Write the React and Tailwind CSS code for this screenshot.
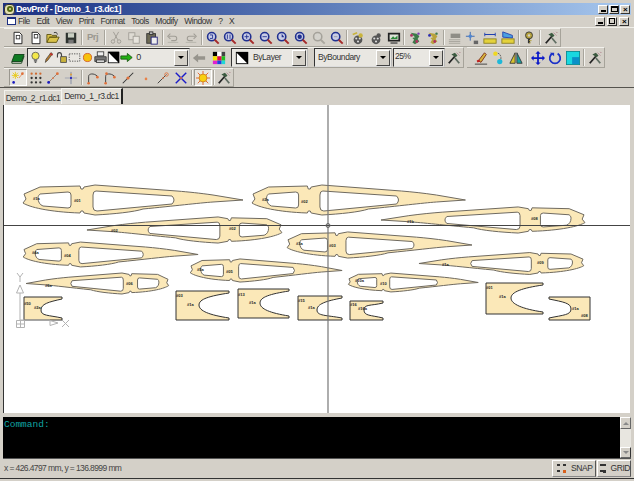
import React from 'react'

const I = ({ children }) => (
    <svg width="14" height="14" viewBox="0 0 16 16" fill="none">{children}</svg>
)

const B = ({ children, active }) => (
    <div className={`w-[17.7px] h-full shrink-0 flex items-center justify-center ${active ? 'bg-[#e8e6e0] border border-t-[#9a978f] border-l-[#9a978f] border-r-white border-b-white' : ''}`}>
        {children}
    </div>
)

const Sep = () => (
    <div className="w-[4px] shrink-0 h-full flex justify-center py-[1px]">
        <div className="w-[1px] h-full bg-[#a8a59c] border-r border-[#f4f3ef] box-content"></div>
    </div>
)

const Toolbar = ({ children }) => (
    <div className="flex h-full items-stretch pl-[5px] border-t border-[#f2f1ec] border-b border-b-[#a6a39a] border-r border-r-[#a6a39a]">
        {children}
    </div>
)

const Combo = ({ className, children }) => (
    <div className={`h-[19px] self-center shrink-0 flex items-center bg-[#e9e7e2] border border-t-[#333] border-l-[#333] border-r-[#bbb] border-b-[#ddd] ${className}`}>
        <div className="flex-1 flex items-center min-w-0 overflow-hidden h-full">{children}</div>
        <div className="w-[14px] h-[16px] mr-[1px] bg-[#d4d0c8] border border-t-white border-l-white border-r-[#444] border-b-[#444] flex items-center justify-center">
            <div className="w-0 h-0 border-x-[3px] border-x-transparent border-t-[3px] border-t-black"></div>
        </div>
    </div>
)

const Doc = ({ mark }) => (
    <I>
        <path d="M3.5 1.5h6l3 3v10h-9z" fill="#fff" stroke="#111" />
        <rect x="6" y={mark} width="4" height="4" fill="none" stroke="#333" />
    </I>
)
const Folder = () => (
    <I>
        <path d="M1 13V4h5l1 1h5v2H4l-3 6h11l3-6H4" fill="#d9c24a" stroke="#5a5010" />
        <path d="M9 2c2-1 4 0 4 2" stroke="#222" />
    </I>
)
const Save = () => (
    <I>
        <rect x="2" y="2" width="12" height="12" fill="#2f3430" />
        <rect x="4.5" y="2.5" width="7" height="5" fill="#c9cfc2" />
        <rect x="5" y="10" width="6" height="4" fill="#777" />
    </I>
)
const Scissors = () => (
    <I>
        <path d="M5 1l5 9M11 1L6 10" stroke="#9b9890" />
        <circle cx="4.5" cy="12" r="2" stroke="#9b9890" />
        <circle cx="11.5" cy="12" r="2" stroke="#9b9890" />
    </I>
)
const Copy = () => (
    <I>
        <rect x="2" y="2" width="7" height="8" fill="#dedbd3" stroke="#a09d95" />
        <rect x="7" y="6" width="7" height="8" fill="#e6e3dc" stroke="#a09d95" />
    </I>
)
const Paste = () => (
    <I>
        <rect x="2" y="3" width="10" height="11" fill="#6d6a55" stroke="#333" />
        <rect x="5" y="1" width="4" height="3" fill="#bbb" stroke="#333" />
        <rect x="7" y="7" width="7" height="8" fill="#eee" stroke="#23237a" />
    </I>
)
const Undo = ({ flip }) => (
    <I>
        <g transform={flip ? 'matrix(-1 0 0 1 16 0)' : undefined}>
            <path d="M3 6h7c3 0 3 5 0 5H6" stroke="#a09d95" strokeWidth="1.2" />
            <path d="M5 3L2 6l3 3" stroke="#a09d95" strokeWidth="1.2" />
            <path d="M2 13h12" stroke="#b5b2aa" />
        </g>
    </I>
)
const Zoom = ({ gray, children }) => (
    <I>
        <circle cx="6.5" cy="6.5" r="4.7" fill={gray ? '#d4d2cc' : '#c8cce6'} stroke={gray ? '#a5a29a' : '#20308f'} strokeWidth="1.8" />
        {children}
        <path d="M10 10l4.5 4.5" stroke={gray ? '#aaa79f' : '#a52a2a'} strokeWidth="2.2" />
    </I>
)
const Reel = ({ mark }) => (
    <I>
        <circle cx="8" cy="10" r="5" fill="#555" />
        <circle cx="6" cy="8.5" r="1.2" fill="#ddd" />
        <circle cx="10" cy="8.5" r="1.2" fill="#ddd" />
        <circle cx="8" cy="12" r="1.2" fill="#ddd" />
        <circle cx="11" cy="5" r="2.5" fill={mark ? '#c9b43c' : '#555'} />
        {mark && <path d="M2 4l5-2" stroke="#c9b43c" strokeWidth="2" />}
    </I>
)
const Monitor = () => (
    <I>
        <rect x="1" y="2" width="14" height="10" fill="#222" />
        <rect x="3" y="4" width="10" height="6" fill="#dfe3d8" />
        <path d="M4 9l3-3 2 2 3-3v4H4z" fill="#2d8a3a" />
        <rect x="4" y="13" width="8" height="1.5" fill="#444" />
    </I>
)
const Blob = ({ alt }) => (
    <I>
        <path d="M3 2l7 1 3 3-2 3 2 3-5 3-3-2 2-3-2-2 3-1-2-2z" fill={alt ? '#b8a23c' : '#3d7a4a'} />
        <circle cx="4" cy="5" r="1.6" fill={alt ? '#2f2fb0' : '#b03060'} />
        <circle cx="10" cy="12" r="1.6" fill="#b03060" />
        <circle cx="12" cy="3" r="1.4" fill={alt ? '#3d7a4a' : '#7a3db0'} />
    </I>
)
const GrayLayers = () => (
    <I>
        <rect x="3" y="3" width="11" height="5" fill="#8f8d86" />
        <path d="M1 10h13M1 12h13M1 14h13" stroke="#a5a29a" />
    </I>
)
const Coord = () => (
    <I>
        <path d="M6 1v10M1 6h10" stroke="#2f5fb0" />
        <circle cx="6" cy="6" r="2" fill="#4f86d0" />
        <rect x="10" y="11" width="5" height="4" fill="#666" />
    </I>
)
const DimA = () => (
    <I>
        <path d="M2 4h12" stroke="#1f3fb0" strokeWidth="1.2" />
        <path d="M2 2v4M14 2v4" stroke="#1f3fb0" />
        <rect x="1" y="9" width="14" height="5" fill="#e4d23c" stroke="#8a7f20" />
    </I>
)
const DimB = () => (
    <I>
        <path d="M2 7V1l11 4v3z" fill="#4aa0e0" stroke="#1f3fb0" />
        <rect x="1" y="9" width="14" height="5" fill="#e4d23c" stroke="#8a7f20" />
    </I>
)
const Help = () => (
    <I>
        <circle cx="8" cy="5" r="4" fill="#b5a23c" stroke="#333" />
        <circle cx="8" cy="5" r="1.4" fill="#d4d0c8" />
        <path d="M8 9v5" stroke="#333" strokeWidth="2.5" />
        <path d="M8 11h3M8 13.500h2" stroke="#b5a23c" />
    </I>
)
const Tool = () => (
    <I>
        <path d="M2 14l7-8" stroke="#222" strokeWidth="2" />
        <path d="M5 4l4-2 3 3-2 2z" fill="#3b5a40" />
        <path d="M9 8l5 6" stroke="#5f6d62" strokeWidth="2" />
        <path d="M11 2l1 1M13 4l1 1M14 1l1 1" stroke="#a05a70" />
    </I>
)
const Layers = () => (
    <I>
        <path d="M4 4h11l-3 8H1z" fill="#0f7a22" stroke="#0b3d14" />
        <path d="M1 12l-0 2h11l3-8" fill="none" stroke="#0b3d14" />
    </I>
)
const Bulb = () => (
    <I>
        <circle cx="8" cy="6" r="4.5" fill="#f4e84a" stroke="#555" />
        <rect x="6" y="10" width="4" height="3" fill="#777" />
        <rect x="7" y="13" width="2" height="1.500" fill="#333" />
    </I>
)
const Pencil = () => (
    <I>
        <path d="M4 14l1-4 6-8 2 1.500-6 8z" fill="#b57a2a" stroke="#333" strokeWidth="0.8" />
        <path d="M10 3l3 2" stroke="#c03030" strokeWidth="2" />
    </I>
)
const Lock = () => (
    <I>
        <rect x="7" y="7" width="7" height="7" fill="#c9b23c" stroke="#444" />
        <path d="M3 8V5c0-4 5-4 5 0v2" stroke="#444" strokeWidth="1.4" />
    </I>
)
const Dash = () => (
    <I>
        <rect x="1.500" y="3.500" width="13" height="9" stroke="#333" strokeDasharray="1.500 1.500" />
    </I>
)
const Sun = () => (
    <I>
        <circle cx="8" cy="8" r="5" fill="#f6c20e" stroke="#d0501c" />
    </I>
)
const Printer = () => (
    <I>
        <rect x="4" y="1" width="8" height="5" fill="#eee" stroke="#333" />
        <path d="M1 7h14v6H1z" fill="#777" stroke="#333" />
        <rect x="3" y="11" width="10" height="3" fill="#ddd" stroke="#333" />
    </I>
)
const Swatch = () => (
    <I>
        <rect x="1.500" y="1.500" width="13" height="13" fill="#fff" stroke="#000" />
        <path d="M1 1h14v14z" fill="#000" />
    </I>
)
const GreenArrow = () => (
    <I>
        <path d="M1 6h8V3l6 5-6 5v-3H1z" fill="#22b014" stroke="#14500c" />
    </I>
)
const GrayArrow = () => (
    <I>
        <path d="M15 6H7V3L1 8l6 5v-3h8z" fill="#97948c" />
    </I>
)
const Palette = () => (
    <I>
        <rect x="1" y="1" width="5" height="5" fill="#000" />
        <rect x="6" y="1" width="5" height="5" fill="#fff" />
        <rect x="11" y="1" width="4" height="5" fill="#444" />
        <rect x="1" y="6" width="5" height="5" fill="#f5e300" />
        <rect x="6" y="6" width="5" height="5" fill="#e0104a" />
        <rect x="11" y="6" width="4" height="5" fill="#20c020" />
        <rect x="1" y="11" width="5" height="4" fill="#e020d0" />
        <rect x="6" y="11" width="5" height="4" fill="#2040e0" />
        <rect x="11" y="11" width="4" height="4" fill="#20d8d8" />
    </I>
)
const Brush = () => (
    <I>
        <path d="M5 11L12 2l2 2-6 9z" fill="#d4b43c" stroke="#7a2a10" />
        <path d="M3 11c2-2 4-1 4 1l-3 1z" fill="#c02020" />
        <path d="M1 15h14" stroke="#333" />
    </I>
)
const Joint = () => (
    <I>
        <path d="M5 2c6 0 8 5 5 11" stroke="#555" strokeDasharray="2 1" />
        <circle cx="5" cy="3" r="2.500" fill="#f0d820" />
        <circle cx="10" cy="12" r="3" fill="#20b8d8" />
    </I>
)
const Mirror = () => (
    <I>
        <path d="M7 2v12H1z" fill="#d8c230" stroke="#333" />
        <path d="M9 2v12h6z" fill="#18a0a0" stroke="#333" />
    </I>
)
const Move = () => (
    <I>
        <path d="M8 0l3 3H9v4h4V5l3 3-3 3V9H9v4h2l-3 3-3-3h2V9H3v2L0 8l3-3v2h4V3H5z" fill="#0a18c8" />
    </I>
)
const Rotate = () => (
    <I>
        <path d="M5 3a6 6 0 1 0 6 0" stroke="#1a30c8" strokeWidth="2" />
        <path d="M2 2h5v4z" fill="#1a30c8" />
    </I>
)
const Scale = () => (
    <I>
        <rect x="0.500" y="0.500" width="15" height="15" fill="#18d8e0" stroke="#0a8a90" />
        <rect x="7" y="7" width="8" height="8" fill="#0a90c8" />
    </I>
)
const SnapStar = () => (
    <I>
        <path d="M5 1v8M1 5h8M2 2l6 6M8 2L2 8" stroke="#e8c810" />
        <circle cx="3" cy="13" r="1.500" fill="#1a1ac0" />
        <path d="M9 8l5-6" stroke="#e08a5a" />
        <circle cx="13" cy="3" r="1.500" fill="#e0703a" />
    </I>
)
const Dots = ({ c = '#333' }) => (
    <I>
        {[3, 8, 13].map((x) => [3, 8, 13].map((y) => <circle key={`${x}${y}`} cx={x} cy={y} r="1.300" fill={y === 3 ? '#d06a30' : c} />))}
    </I>
)
const Line1 = () => (
    <I>
        <path d="M3 13L13 3" stroke="#8a7a70" />
        <circle cx="3" cy="13" r="1.600" fill="#1a1ac0" />
        <circle cx="13" cy="3" r="1.600" fill="#e0703a" />
        <circle cx="8" cy="8" r="1" fill="#e0703a" />
    </I>
)
const Cross = () => (
    <I>
        <path d="M1 8h14" stroke="#9aa0b0" />
        <path d="M8 1v14" stroke="#7a86a0" />
        <circle cx="8" cy="4" r="1.200" fill="#e0a03a" />
        <circle cx="8" cy="8" r="1.200" fill="#1a1ac0" />
    </I>
)
const Arc = ({ end }) => (
    <I>
        <path d="M3 14V6c0-3 6-4 10 0" stroke="#333" />
        <circle cx="3" cy="14" r="1.500" fill="#e0703a" />
        <circle cx="13" cy="7" r="1.500" fill="#e0703a" />
        {end && <circle cx="4" cy="3" r="1.500" fill="#e0703a" />}
    </I>
)
const Slash = () => (
    <I>
        <path d="M2 14L14 2" stroke="#333" strokeWidth="1.200" />
        <circle cx="8" cy="8" r="1.800" fill="#e0703a" />
    </I>
)
const Point = () => (
    <I>
        <circle cx="8" cy="9" r="1.500" fill="#e8824a" />
    </I>
)
const Perp = () => (
    <I>
        <path d="M2 14L12 4" stroke="#333" />
        <circle cx="12" cy="4" r="2" stroke="#e0703a" />
        <circle cx="8" cy="8" r="1" fill="#e0703a" />
    </I>
)
const XMark = () => (
    <I>
        <path d="M2 2l12 12" stroke="#1a1ac8" strokeWidth="1.600" />
        <path d="M14 2L2 14" stroke="#1a1ac8" strokeWidth="1.600" />
        <circle cx="8" cy="8" r="1.200" fill="#e0703a" />
    </I>
)
const Bright = () => (
    <I>
        <path d="M8 0v16M0 8h16M2 2l12 12M14 2L2 14" stroke="#e05a20" />
        <circle cx="8" cy="8" r="4.500" fill="#f8d010" stroke="#d0801c" />
    </I>
)

const Wing = ({ x, y, sx, sy }) => (
    <g transform={`translate(${x} ${y}) scale(${sx} ${sy})`} fill="#fbe8b8" stroke="#6f6a60" strokeWidth="1">
        <path
            vectorEffect="non-scaling-stroke"
            fillRule="evenodd"
            d="M0,-6 L2,-1 L-1,3 C5,7 25,12 56,13 L57,11 L59,11 L60,13 L71,15 C90,14 110,12 119,9 C150,6 175,3 189,2 L219,0 L189,-5 C175,-7 165,-8 153,-9 L71,-15 L60,-13 L59,-11 L57,-11 L56,-14 L16,-13 Z
            M14,-2 C14,-4 15,-5 16,-6 L44,-8 Q47,-8 47,-5 L47,5 Q47,8 44,8 L19,6 C16,5 14,2 14,-2 Z
            M69,-5 Q69,-9 72,-9 L148,-4 Q152,0 148,4 L73,11 Q69,11 69,7 Z"
        />
    </g>
)

const Rib = ({ x0, x1, y0, y1, xc, yc }) => {
    const k = xc + (x1 - xc) * 0.35
    const d = `M${x0},${y0} L${x1},${y0} L${x1},${y0 + 2} C${k},${y0 + 5} ${xc},${yc - 6} ${xc},${yc} C${xc},${yc + 6} ${k},${y1 - 5} ${x1},${y1 - 2} L${x1},${y1} L${x0},${y1} Z`
    return <path d={d} fill="#fbe8b8" stroke="#333" strokeWidth="1" />
}

const wings = [
    { x: 24, y: 200, sx: 1, sy: 1 },
    { x: 253, y: 200, sx: 0.97, sy: 1 },
    { x: 281, y: 230, sx: -0.886, sy: 0.87 },
    { x: 584, y: 220, sx: -0.927, sy: 0.87 },
    { x: 24, y: 254.5, sx: 0.795, sy: 0.83 },
    { x: 288, y: 245, sx: 0.84, sy: 0.87 },
    { x: 168, y: 283.5, sx: -0.648, sy: 0.7 },
    { x: 191, y: 270.5, sx: 0.69, sy: 0.77 },
    { x: 583, y: 263.5, sx: -0.749, sy: 0.73 },
    { x: 349, y: 282.5, sx: 0.59, sy: 0.63 },
]

const ribs = [
    { x0: 24, x1: 62, y0: 297, y1: 320, xc: 41, yc: 310 },
    { x0: 176, x1: 229, y0: 291, y1: 320, xc: 199, yc: 305 },
    { x0: 238, x1: 289, y0: 289, y1: 318, xc: 260, yc: 303 },
    { x0: 298, x1: 342, y0: 296, y1: 320, xc: 317, yc: 310 },
    { x0: 350, x1: 383, y0: 301, y1: 320, xc: 364, yc: 310 },
    { x0: 486, x1: 543, y0: 283, y1: 314, xc: 511, yc: 298 },
    { x0: 590, x1: 549, y0: 297, y1: 320, xc: 571, yc: 309 },
]

const labels = [
    [33, 200, '#1a'], [74, 202, '#01'], [262, 201, '#2a'], [301, 203, '#02'], [111, 232, '#02'], [229, 230, '#02'],
    [296, 245, '#3a'], [329, 247, '#03'], [32, 254, '#4a'], [64, 257, '#04'], [45, 287, '#6a'], [126, 285, '#06'],
    [197, 271, '#5a'], [226, 273, '#05'], [407, 223, '#1b'], [531, 220, '#08'], [442, 266, '#1a'], [537, 264, '#09'],
    [355, 282, '#10a'], [380, 285, '#10'], [176, 297, '#03'], [187, 306, '#1a'], [238, 296, '#13'], [249, 304, '#1a'],
    [298, 302, '#15'], [308, 309, '#1a'], [24, 305, '#50'], [34, 309, '#2a'], [350, 306, '#16'], [358, 310, '#16a'],
    [486, 289, '#01'], [499, 298, '#1a'], [572, 310, '#1a'], [581, 317, '#08'],
]

const Drawing = () => (
    <svg className="w-full h-full block" viewBox="4 105 626 308" preserveAspectRatio="none">
        {wings.map((w, i) => <Wing key={i} {...w} />)}
        {ribs.map((r, i) => <Rib key={i} {...r} />)}
        {labels.map(([x, y, t], i) => (
            <text key={i} x={x} y={y} fontSize="4" fontWeight="700" letterSpacing="0" fill="#222" fontFamily="Liberation Sans, sans-serif">{t}</text>
        ))}
        <g stroke="#b3b3b3" fill="none">
            <path d="M20 293V320H50M16.500 320.500h8v7h-8zM20.500 320v7M16.500 324h8" />
            <path d="M20 285l-3.500 8h7zM50 320.500l8 2.500-8 2.500z" />
            <path d="M17 273l3 4 3-4M20 277v5M62 320l7 7M69 320l-7 7" />
        </g>
        <path d="M328 105V413" stroke="#777" strokeWidth="1.200" />
        <path d="M4 225.500H630" stroke="#444" strokeWidth="1" />
        <circle cx="328" cy="225.500" r="2" fill="none" stroke="#666" />
    </svg>
)

const WinBtn = ({ children }) => (
    <div className="w-[10px] h-[9px] bg-[#d4d0c8] border border-t-white border-l-white border-r-[#333] border-b-[#333] flex items-end justify-center">
        {children}
    </div>
)

const menus = ['File', 'Edit', 'View', 'Print', 'Format', 'Tools', 'Modify', 'Window', '?', 'X']

const Panel = ({ label, className }) => (
    <div className={`h-[17px] flex items-center gap-[5px] pl-[3px] border border-t-white border-l-white border-r-[#555] border-b-[#888] ${className}`}>
        <div className="w-[10px] h-[10px] grid grid-cols-2 gap-[2px] place-items-center">
            <span className="w-[3px] h-[2px] bg-[#333]"></span><span className="w-[3px] h-[2px] bg-[#333]"></span>
            <span className="w-[3px] h-[2px] bg-[#333]"></span><span className={`w-[3px] h-[3px] ${label === 'SNAP' ? 'bg-[#d8601c]' : 'bg-[#333]'}`}></span>
        </div>
        <span>{label}</span>
    </div>
)

const App = () => {
    return (
        <div className="w-[634px] h-[481px] overflow-hidden bg-[#d4d0c8] flex flex-col text-[#333] font-['Liberation_Sans',sans-serif] text-[8.5px] tracking-[-0.45px]">
            {/* title bar */}
            <div className="h-[12px] mt-[3px] mx-[3px] shrink-0 flex items-center gap-[1px] bg-gradient-to-r from-[#1c2f82] to-[#a8c8ee]">
                <div className="w-[11px] h-[11px] ml-[1px] bg-[#e4e0b0] border border-[#333] rounded-sm flex items-center justify-center">
                    <div className="w-[6px] h-[6px] rounded-full border-2 border-[#556b10]"></div>
                </div>
                <span className="text-white font-bold text-[9px] leading-none tracking-[-0.4px]">DevProf - [Demo_1_r3.dc1]</span>
                <div className="ml-auto flex gap-[1px] mr-[1px]">
                    <WinBtn><span className="w-[5px] h-[2px] mb-[1px] bg-black"></span></WinBtn>
                    <WinBtn><span className="w-[7px] h-[6px] mb-[1px] border border-t-2 border-black"></span></WinBtn>
                    <WinBtn><span className="text-[8px] leading-[7px] font-bold text-black">×</span></WinBtn>
                </div>
            </div>

            {/* menu bar */}
            <div className="h-[13px] shrink-0 flex items-center pl-[7px] pr-[4px] border-b border-[#f0efea]">
                <div className="w-[9px] h-[8px] mr-[2px] bg-white border border-t-2 border-[#1c2f82]"></div>
                <div className="flex gap-[6.500px] leading-none">
                    {menus.map((m) => <span key={m}>{m}</span>)}
                </div>
                <div className="ml-auto flex gap-[2px] mr-[1px]">
                    <WinBtn><span className="w-[5px] h-[2px] mb-[1px] bg-black"></span></WinBtn>
                    <WinBtn><span className="w-[6px] h-[6px] mb-[1px] border border-black"></span></WinBtn>
                    <WinBtn><span className="text-[8px] leading-[7px] font-bold text-black">×</span></WinBtn>
                </div>
            </div>

            {/* standard toolbar */}
            <div className="h-[19px] shrink-0 flex pl-[4px]">
                <Toolbar>
                    <B><Doc mark={5} /></B><B><Doc mark={4} /></B><B><Folder /></B><B><Save /></B>
                    <Sep />
                    <B><span className="text-[#9b9890] font-bold text-[9.500px]">Prj</span></B>
                    <div className="w-[2px]"></div>
                    <Sep />
                    <B><Scissors /></B><B><Copy /></B><B><Paste /></B>
                    <Sep />
                    <B><Undo /></B><B><Undo flip /></B>
                    <Sep />
                    <B><Zoom><path d="M4.500 4.500h3v4h-3" stroke="#20308f" /></Zoom></B>
                    <B><Zoom><path d="M5 4v5M8 4v5" stroke="#20308f" /></Zoom></B>
                    <B><Zoom><path d="M4 6.500h5M6.500 4v5" stroke="#20308f" /></Zoom></B>
                    <B><Zoom><path d="M4 6.500h5" stroke="#20308f" /></Zoom></B>
                    <B><Zoom><path d="M6.500 3v4h3z" fill="#20308f" /></Zoom></B>
                    <B><Zoom><circle cx="6.500" cy="6.500" r="2.500" fill="#20308f" /></Zoom></B>
                    <B><Zoom gray /></B>
                    <B><Zoom><path d="M4.500 6.500h4" stroke="#999" /></Zoom></B>
                    <Sep />
                    <B><Reel mark /></B><B><Reel /></B><B><Monitor /></B>
                    <Sep />
                    <B><Blob /></B><B><Blob alt /></B>
                    <Sep />
                    <B><GrayLayers /></B><B><Coord /></B><B><DimA /></B><B><DimB /></B>
                    <Sep />
                    <B><Help /></B>
                    <Sep />
                    <B><Tool /></B>
                </Toolbar>
            </div>

            {/* layer + properties + modify toolbars */}
            <div className="h-[21px] shrink-0 flex pl-[4px]">
                <Toolbar>
                    <B><Layers /></B>
                    <Combo className="w-[163px]">
                        <div className="flex items-center pl-[1.500px] [&_svg]:w-[13px] [&_svg]:h-[13px]">
                            <Bulb /><Pencil /><Lock /><Dash /><Sun /><Printer /><Swatch /><GreenArrow />
                            <span className="ml-[3px] text-[9px]">0</span>
                        </div>
                    </Combo>
                    <B><GrayArrow /></B>
                    <div className="w-[3px]"></div>
                    <B><Palette /></B>
                    <div className="w-[3px]"></div>
                    <Combo className="w-[77px]">
                        <div className="ml-[3px] mr-[4px]"><Swatch /></div>
                        <span>ByLayer</span>
                    </Combo>
                    <div className="w-[6px]"></div>
                    <Combo className="w-[78px]">
                        <span className="ml-[3px]">ByBoundary</span>
                    </Combo>
                    <div className="w-[1px]"></div>
                    <Combo className="w-[52px]">
                        <span className="ml-[1px] mb-[3px]">25%</span>
                    </Combo>
                    <B><Tool /></B>
                </Toolbar>
                <div className="w-[3px]"></div>
                <Toolbar>
                    <B><Brush /></B><B><Joint /></B><B><Mirror /></B>
                    <Sep />
                    <B><Move /></B><B><Rotate /></B><B><Scale /></B>
                    <Sep />
                    <B><Tool /></B>
                </Toolbar>
            </div>

            {/* snap toolbar */}
            <div className="h-[19px] shrink-0 flex pl-[4px]">
                <Toolbar>
                    <B active><SnapStar /></B>
                    <B><Dots /></B><B><Line1 /></B><B><Cross /></B>
                    <Sep />
                    <B><Arc /></B><B><Arc end /></B><B><Slash /></B><B><Point /></B><B><Perp /></B><B><XMark /></B>
                    <Sep />
                    <B active><Bright /></B>
                    <Sep />
                    <B><Tool /></B>
                </Toolbar>
            </div>

            {/* document tabs */}
            <div className="h-[18px] shrink-0 flex pl-[4px] pr-[4px] border-t border-[#55534e]">
                <div className="w-[57px] h-[15px] mt-[2px] flex items-center justify-center border-t border-l border-[#f2f1ec] bg-[#dbd8d0]">Demo_2_r1.dc1</div>
                <div className="w-[62px] h-[16px] flex items-center justify-center bg-[#e2dfd8] border-t border-l border-[#f6f5f1] border-r-2 border-r-[#222]">Demo_1_r3.dc1</div>
            </div>

            {/* drawing canvas */}
            <div className="h-[308px] shrink-0 ml-[3px] mr-[4px] bg-white border-l border-[#333]">
                <Drawing />
            </div>

            {/* command window */}
            <div className="h-[42px] shrink-0 mt-[4px] ml-[3px] mr-[3px] flex border-b border-[#555]">
                <div className="flex-1 bg-black px-[1px] pt-[1px] font-['Liberation_Mono',monospace] text-[9.500px] tracking-normal leading-[14px] text-[#10a5a5]">Command:</div>
                <div className="w-[11px] flex flex-col justify-between bg-[#e8e6e0]">
                    <div className="h-[12px] bg-[#d4d0c8] border border-t-white border-l-white border-r-[#666] border-b-[#666] flex items-center justify-center">
                        <div className="w-0 h-0 border-x-[3px] border-x-transparent border-b-[3px] border-b-[#888]"></div>
                    </div>
                    <div className="h-[11px] bg-[#d4d0c8] border border-t-white border-l-white border-r-[#333] border-b-[#666] flex items-center justify-center">
                        <div className="w-0 h-0 border-x-[3px] border-x-transparent border-t-[3px] border-t-[#888]"></div>
                    </div>
                </div>
            </div>

            {/* status bar */}
            <div className="h-[20px] shrink-0 flex items-center pl-[4px] pr-[3px] border-b border-[#333]">
                <span className="tracking-[-0.6px] text-[#444]">x = 426.4797 mm, y = 136.8999 mm</span>
                <div className="ml-auto flex gap-[1px]">
                    <Panel label="SNAP" className="w-[44px]" />
                    <Panel label="GRID" className="w-[34px]" />
                </div>
            </div>
        </div>
    )
}

export default App
